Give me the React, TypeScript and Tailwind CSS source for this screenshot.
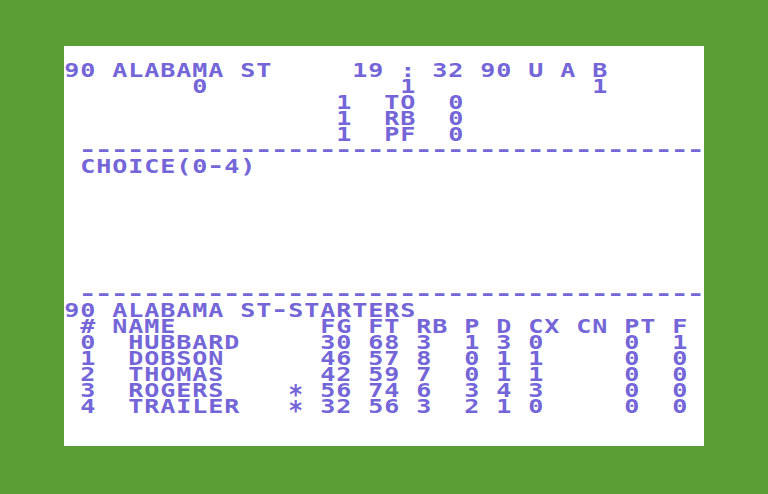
import React from "react";

// 40x25 character screen, each cell 16x16 px
const COLS = 40;
const ROWS = 25;

type Part = [number, string];

function line(...parts: Part[]): string {
  const cells = Array(COLS).fill(" ");
  for (const [col, text] of parts) {
    for (let i = 0; i < text.length; i++) {
      if (col + i < COLS) cells[col + i] = text[i];
    }
  }
  return cells.join("");
}

const dashes = "-".repeat(39);

const screen: Record<number, string> = {
  1: line([0, "90 ALABAMA ST"], [18, "19"], [21, ":"], [23, "32"], [26, "90"], [29, "U"], [31, "A"], [33, "B"]),
  2: line([8, "0"], [21, "1"], [33, "1"]),
  3: line([17, "1"], [20, "TO"], [24, "0"]),
  4: line([17, "1"], [20, "RB"], [24, "0"]),
  5: line([17, "1"], [20, "PF"], [24, "0"]),
  6: line([1, dashes]),
  7: line([1, "CHOICE(0-4)"]),
  15: line([1, dashes]),
  16: line([0, "90 ALABAMA ST-STARTERS"]),
  17: line([1, "#"], [3, "NAME"], [16, "FG"], [19, "FT"], [22, "RB"], [25, "P"], [27, "D"], [29, "CX"], [32, "CN"], [35, "PT"], [38, "F"]),
  18: line([1, "0"], [4, "HUBBARD"], [16, "30"], [19, "68"], [22, "3"], [25, "1"], [27, "3"], [29, "0"], [35, "0"], [38, "1"]),
  19: line([1, "1"], [4, "DOBSON"], [16, "46"], [19, "57"], [22, "8"], [25, "0"], [27, "1"], [29, "1"], [35, "0"], [38, "0"]),
  20: line([1, "2"], [4, "THOMAS"], [16, "42"], [19, "59"], [22, "7"], [25, "0"], [27, "1"], [29, "1"], [35, "0"], [38, "0"]),
  21: line([1, "3"], [4, "ROGERS"], [14, "*"], [16, "56"], [19, "74"], [22, "6"], [25, "3"], [27, "4"], [29, "3"], [35, "0"], [38, "0"]),
  22: line([1, "4"], [4, "TRAILER"], [14, "*"], [16, "32"], [19, "56"], [22, "3"], [25, "2"], [27, "1"], [29, "0"], [35, "0"], [38, "0"]),
};

function Glyph({ ch }: { ch: string }) {
  if (ch === " ") return <span className="w-4 h-4 shrink-0" />;
  if (ch === "-") {
    return (
      <span className="w-4 h-4 shrink-0 flex justify-center">
        <span className="inline-block scale-x-[1.6] -translate-y-[1px]">-</span>
      </span>
    );
  }
  if (ch === "*") {
    return (
      <span className="w-4 h-4 shrink-0 flex justify-center">
        <span className="inline-block scale-x-[1.3] scale-y-[1.4] translate-y-[4px]">*</span>
      </span>
    );
  }
  return (
    <span className="w-4 h-4 shrink-0 flex justify-center">
      <span className="inline-block scale-x-[1.32]">{ch}</span>
    </span>
  );
}

function Row({ text }: { text?: string }) {
  if (!text) return <div className="h-4" />;
  return (
    <div className="h-4 flex">
      {text.split("").map((ch, i) => (
        <Glyph key={i} ch={ch} />
      ))}
    </div>
  );
}

export default function App() {
  return (
    <div className="w-[768px] h-[494px] bg-[#5c9e36] pt-[46px] pl-[64px]">
      <div className="w-[640px] h-[400px] bg-white flex flex-col font-['DejaVu_Sans_Mono',monospace] font-bold text-[19px] leading-[16px] text-[#7466d8] whitespace-pre">
        {Array.from({ length: ROWS }, (_, r) => (
          <Row key={r} text={screen[r]} />
        ))}
      </div>
    </div>
  );
}
